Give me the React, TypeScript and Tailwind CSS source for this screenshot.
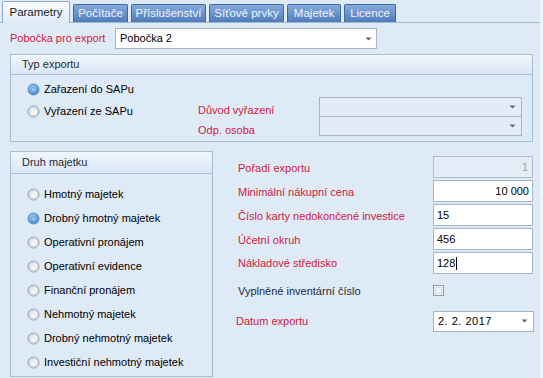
import React from 'react';

const tabs = [
  { label: 'Parametry', w: 'w-[68px]' },
  { label: 'Počítače', w: 'w-[55px]' },
  { label: 'Příslušenství', w: 'w-[75px]' },
  { label: 'Síťové prvky', w: 'w-[75px]' },
  { label: 'Majetek', w: 'w-[54px]' },
  { label: 'Licence', w: 'w-[52px]' },
];

const druhy = [
  { label: 'Hmotný majetek', checked: false },
  { label: 'Drobný hmotný majetek', checked: true },
  { label: 'Operativní pronájem', checked: false },
  { label: 'Operativní evidence', checked: false },
  { label: 'Finanční pronájem', checked: false },
  { label: 'Nehmotný majetek', checked: false },
  { label: 'Drobný nehmotný majetek', checked: false },
  { label: 'Investiční nehmotný majetek', checked: false },
];

function Radio({ checked }: { checked: boolean }) {
  return (
    <svg width="13" height="13" viewBox="0 0 13 13" className="shrink-0">
      <defs>
        <radialGradient id="rOn" cx="0.45" cy="0.4" r="0.6">
          <stop offset="0" stopColor="#d8ecff" />
          <stop offset="0.45" stopColor="#7db8ec" />
          <stop offset="1" stopColor="#3a7fc8" />
        </radialGradient>
        <linearGradient id="rOff" x1="0" y1="0" x2="1" y2="1">
          <stop offset="0" stopColor="#dfe4ea" />
          <stop offset="1" stopColor="#ffffff" />
        </linearGradient>
      </defs>
      {checked ? (
        <>
          <circle cx="6.5" cy="6.5" r="5.5" fill="url(#rOn)" stroke="#5d93c9" strokeWidth="1" />
          <circle cx="6.5" cy="6.5" r="2.6" fill="#8cc3f2" stroke="#4f8dcc" strokeWidth="0.6" />
        </>
      ) : (
        <>
          <circle cx="6.5" cy="6.5" r="5.5" fill="url(#rOff)" stroke="#939eab" strokeWidth="1" />
          <circle cx="6.5" cy="6.5" r="4.2" fill="none" stroke="#c9d1db" strokeWidth="1" />
        </>
      )}
    </svg>
  );
}

function Arrow() {
  return (
    <svg width="7" height="4" viewBox="0 0 7 4" className="shrink-0">
      <path d="M0.5 0.5 L6.5 0.5 L3.5 3.5 Z" fill="#5e6670" />
    </svg>
  );
}

function GroupHeader({ title, h }: { title: string; h: string }) {
  return (
    <div
      className={`${h} flex items-center pl-[11px] border-b border-[#aabdd6] bg-gradient-to-b from-[#f0f6fd] to-[#dae7f7] text-[#1e2a3a]`}
    >
      {title}
    </div>
  );
}

function Field({ value, align = 'left', cursor = false }: { value: string; align?: 'left' | 'right'; cursor?: boolean }) {
  return (
    <div
      className={`w-[100px] h-[22px] bg-white border border-[#a7b4c6] flex items-center px-[3px] text-black ${
        align === 'right' ? 'justify-end' : 'justify-start'
      }`}
    >
      {value}
      {cursor && <span className="w-px h-[13px] bg-black ml-px" />}
    </div>
  );
}

export default function App() {
  return (
    <div className="w-[543px] h-[378px] overflow-hidden bg-[#dfeaf7] font-['Liberation_Sans',Arial,sans-serif] text-[11px] text-black border-r-[3px] border-[#eef4fb]">
      {/* tabs */}
      <div className="h-[23px] flex items-end pl-[2px] gap-[3px] border-b border-[#a3b6cf]">
        {tabs.map((t, i) =>
          i === 0 ? (
            <div
              key={t.label}
              className={`${t.w} h-[22px] -mb-px flex items-center justify-center border border-b-0 border-[#93abcb] bg-gradient-to-b from-[#fbfdff] to-[#dfeaf7] text-[#1a1a1a] text-[11.5px] rounded-t-[2px]`}
            >
              {t.label}
            </div>
          ) : (
            <div
              key={t.label}
              className={`${t.w} h-[18px] flex items-center justify-center border border-b-0 border-[#3e689f] bg-gradient-to-b from-[#86aadb] to-[#4f7cbb] text-[#eef4ff] text-[11.5px] rounded-t-[2px]`}
            >
              {t.label}
            </div>
          )
        )}
      </div>

      <div className="pl-[10px]">
        {/* pobocka */}
        <div className="mt-[5px] h-[21px] flex items-center">
          <div className="w-[105px] text-[#d3193d]">Pobočka pro export</div>
          <div className="w-[262px] h-[21px] bg-white border border-[#a7b4c6] flex items-center justify-between pl-[4px] pr-[4px]">
            <span>Pobočka 2</span>
            <Arrow />
          </div>
        </div>

        {/* typ exportu */}
        <div className="mt-[5px] w-[523px] h-[88px] border border-[#aabdd6]">
          <GroupHeader title="Typ exportu" h="h-[20px]" />
          <div className="flex pl-[16px]">
            <div className="w-[171px] pt-[3px]">
              <div className="h-[22px] flex items-center gap-[4px]">
                <Radio checked />
                <span>Zařazení do SAPu</span>
              </div>
              <div className="h-[23px] flex items-center gap-[4px]">
                <Radio checked={false} />
                <span>Vyřazení ze SAPu</span>
              </div>
            </div>
            <div className="w-[121px] pt-[25px] text-[#d3193d]">
              <div className="h-[20px] flex items-center">Důvod vyřazení</div>
              <div className="h-[20px] flex items-center">Odp. osoba</div>
            </div>
            <div className="pt-[22px]">
              <div className="w-[203px] h-[20px] border border-[#a9b5c5] bg-[#e2ebf6] flex items-center justify-end pr-[5px]">
                <Arrow />
              </div>
              <div className="w-[203px] h-[20px] -mt-px border border-[#a9b5c5] bg-[#e2ebf6] flex items-center justify-end pr-[5px]">
                <Arrow />
              </div>
            </div>
          </div>
        </div>

        <div className="flex">
          {/* druh majetku */}
          <div className="mt-[9px] w-[203px] h-[226px] border border-[#aabdd6]">
            <GroupHeader title="Druh majetku" h="h-[22px]" />
            <div className="pl-[16px] pt-[8px]">
              {druhy.map((d) => (
                <div key={d.label} className="h-[24px] flex items-center gap-[4px]">
                  <Radio checked={d.checked} />
                  <span>{d.label}</span>
                </div>
              ))}
            </div>
          </div>

          {/* right */}
          <div className="ml-[25px] pt-[13px]">
            <div className="h-[24px] flex items-center">
              <div className="w-[195px] text-[#d3193d] pt-[2px]">Pořadí exportu</div>
              <div className="w-[100px] h-[22px] border border-[#b2bdcc] bg-[#e3ecf7] flex items-center justify-end px-[4px] text-[#9aa3ae]">
                1
              </div>
            </div>
            <div className="h-[24px] flex items-center">
              <div className="w-[195px] text-[#d3193d] pt-[2px]">Minimální nákupní cena</div>
              <Field value="10 000" align="right" />
            </div>
            <div className="h-[24px] flex items-center">
              <div className="w-[195px] text-[#d3193d] pt-[2px]">Číslo karty nedokončené investice</div>
              <Field value="15" />
            </div>
            <div className="h-[24px] flex items-center">
              <div className="w-[195px] text-[#d3193d] pt-[2px]">Účetní okruh</div>
              <Field value="456" />
            </div>
            <div className="h-[24px] flex items-center">
              <div className="w-[195px] text-[#d3193d]">Nákladové středisko</div>
              <Field value="128" cursor />
            </div>
            <div className="mt-[4px] h-[24px] flex items-center">
              <div className="w-[195px] text-[#1e2a3a]">Vyplněné inventární číslo</div>
              <div className="w-[11px] h-[11px] border border-[#8c9bb0] bg-[#eef2f7] p-px -mt-[2px]">
                <div className="w-full h-full border border-[#d2dae4]" />
              </div>
            </div>
            <div className="mt-[7px] h-[22px] flex items-center -ml-[2px]">
              <div className="w-[197px] text-[#d3193d]">Datum exportu</div>
              <div className="w-[101px] h-[21px] bg-white border border-[#a7b4c6] flex items-center justify-between pl-[4px] pr-[5px]">
                <span className="tracking-[0.5px]">2. 2. 2017</span>
                <Arrow />
              </div>
            </div>
          </div>
        </div>
      </div>
    </div>
  );
}
